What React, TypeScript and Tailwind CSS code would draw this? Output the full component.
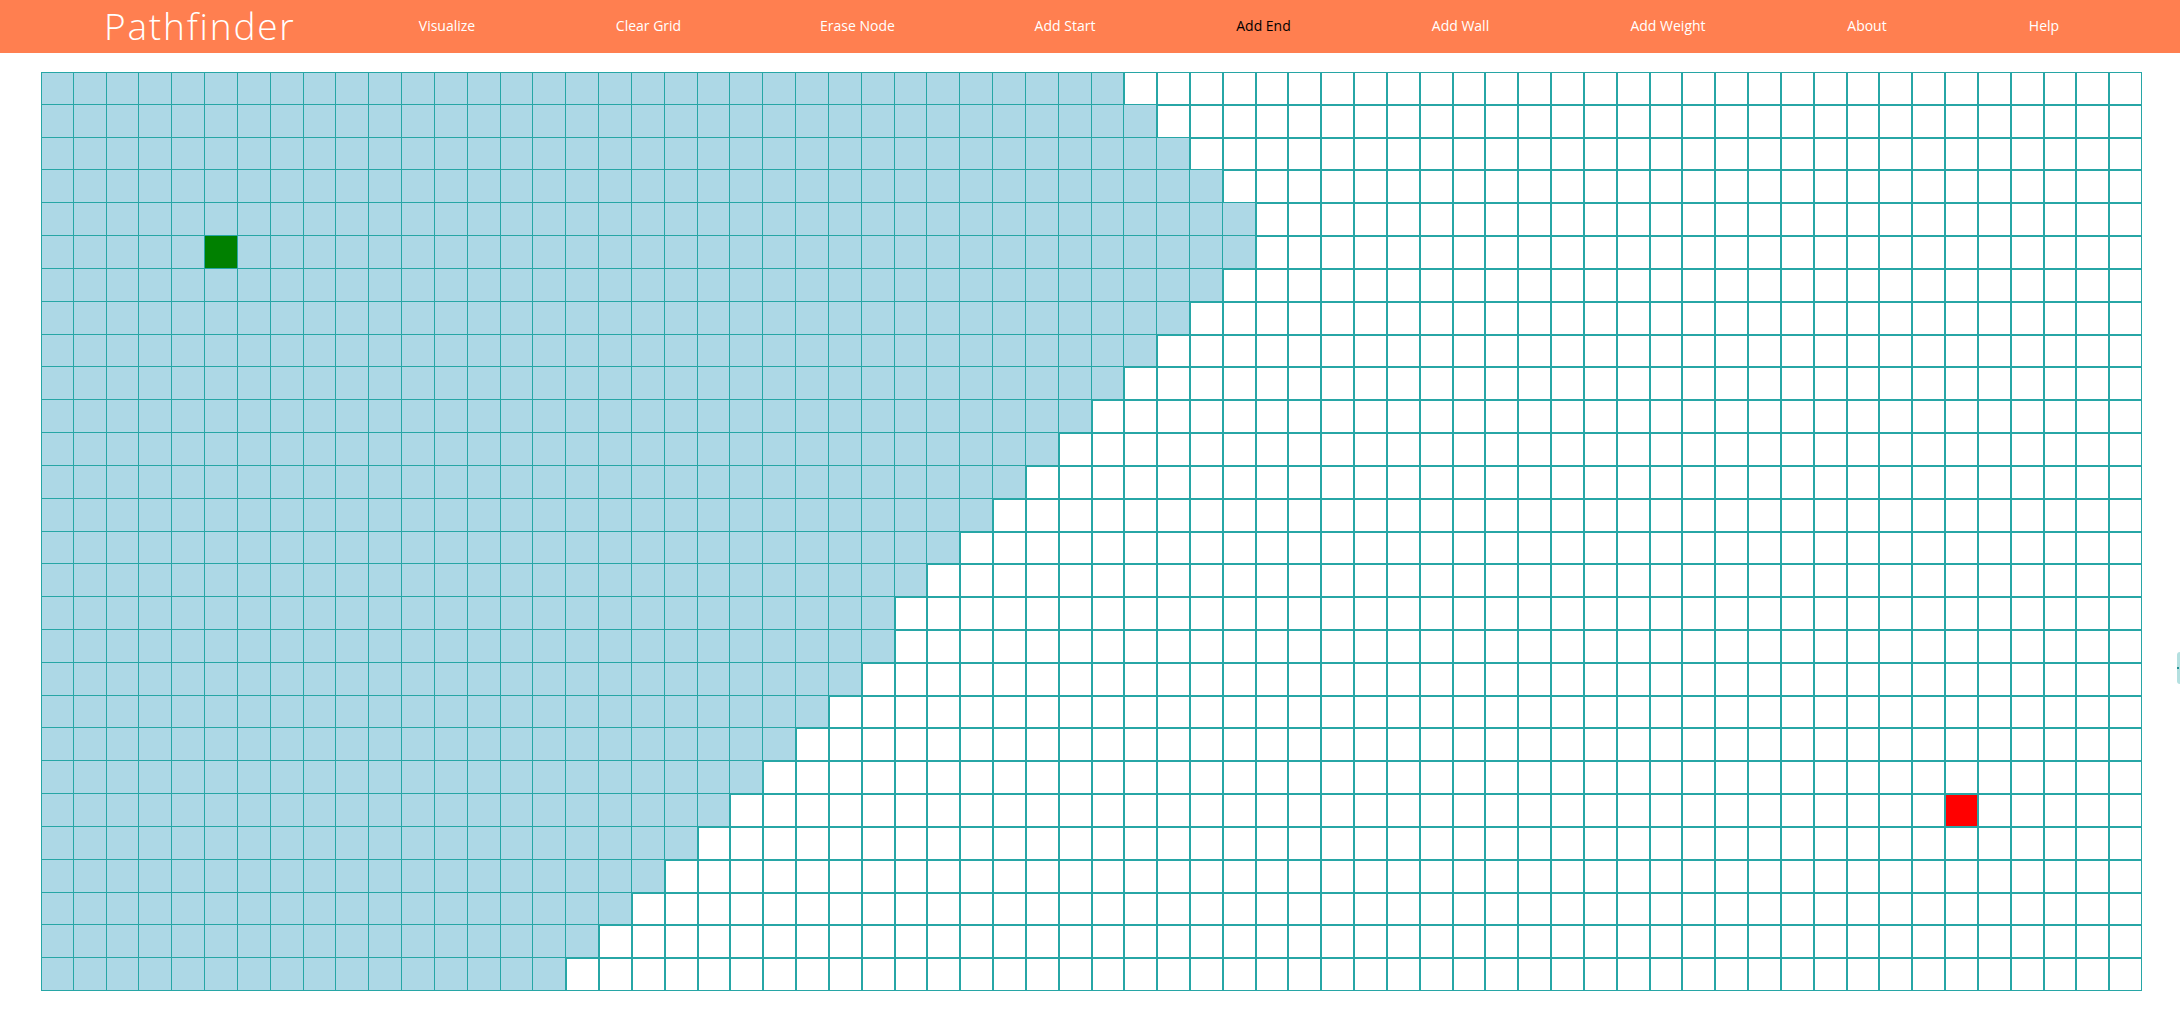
import React from 'react';
import clsx from 'clsx';

const ROWS = 28;
const COLS = 64;
const START = { row: 5, col: 5 };
const END = { row: 22, col: 58 };

// last visited column per row (snapshot of the search mid-animation)
const frontier = [
  32, 33, 34, 35, 36, 36, 35, 34, 33, 32, 31, 30, 29, 28,
  27, 26, 25, 25, 24, 23, 22, 21, 20, 19, 18, 17, 16, 15,
];

const navItems = [
  { label: 'Visualize', width: 'w-[198px]' },
  { label: 'Clear Grid', width: 'w-[205px]' },
  { label: 'Erase Node', width: 'w-[213px]' },
  { label: 'Add Start', width: 'w-[202px]' },
  { label: 'Add End', width: 'w-[195px]', active: true },
  { label: 'Add Wall', width: 'w-[199px]' },
  { label: 'Add Weight', width: 'w-[216px]' },
  { label: 'About', width: 'w-[182px]' },
  { label: 'Help', width: 'w-[172px]' },
];

const Node = ({ row, col }: { row: number; col: number }) => {
  const isStart = row === START.row && col === START.col;
  const isEnd = row === END.row && col === END.col;
  const visited = col <= frontier[row];

  if (visited) {
    return (
      <div
        className={clsx(
          'border-r border-b border-[#27a6a6]',
          row === 0 && 'border-t',
          col === 0 && 'border-l',
          isStart ? 'bg-[#008000]' : 'bg-[#add8e6]'
        )}
      />
    );
  }

  return (
    <div
      className={clsx(
        'border border-[#27a6a6]',
        isEnd ? 'bg-[#ff0000]' : 'bg-white'
      )}
    />
  );
};

const App = () => {
  const cells = [];
  for (let r = 0; r < ROWS; r++) {
    for (let c = 0; c < COLS; c++) {
      cells.push(<Node key={`${r}-${c}`} row={r} col={c} />);
    }
  }

  return (
    <div className="relative min-h-screen bg-white font-['Open_Sans','Noto_Sans',sans-serif]">
      {/* Navbar */}
      <header className="h-[53px] bg-[#ff7f50] flex items-center">
        <div className="w-[348px] shrink-0 pl-[104px]">
          <span className="text-[37px] font-light leading-none tracking-[1.8px] text-white">Pathfinder</span>
        </div>
        <nav className="flex items-center pb-[2px]">
          {navItems.map((item) => (
            <a
              key={item.label}
              className={clsx(
                'text-center text-[14px] cursor-pointer',
                item.width,
                item.active ? 'text-black' : 'text-white'
              )}
            >
              {item.label}
            </a>
          ))}
        </nav>
      </header>

      {/* Grid */}
      <div className="pt-[19px] pl-[41px]">
        <div className="grid w-[2101px] h-[919px] grid-cols-[repeat(64,minmax(0,1fr))] grid-rows-[repeat(28,minmax(0,1fr))]">
          {cells}
        </div>
      </div>

      {/* drawer handle peeking from the right edge */}
      <div className="absolute right-0 top-[652px] w-[3px] h-[32px] rounded-l bg-[#b4e0e0] flex items-center">
        <div className="w-[2px] h-[2px] bg-[#1f8f8f]" />
      </div>
    </div>
  );
};

export default App;
